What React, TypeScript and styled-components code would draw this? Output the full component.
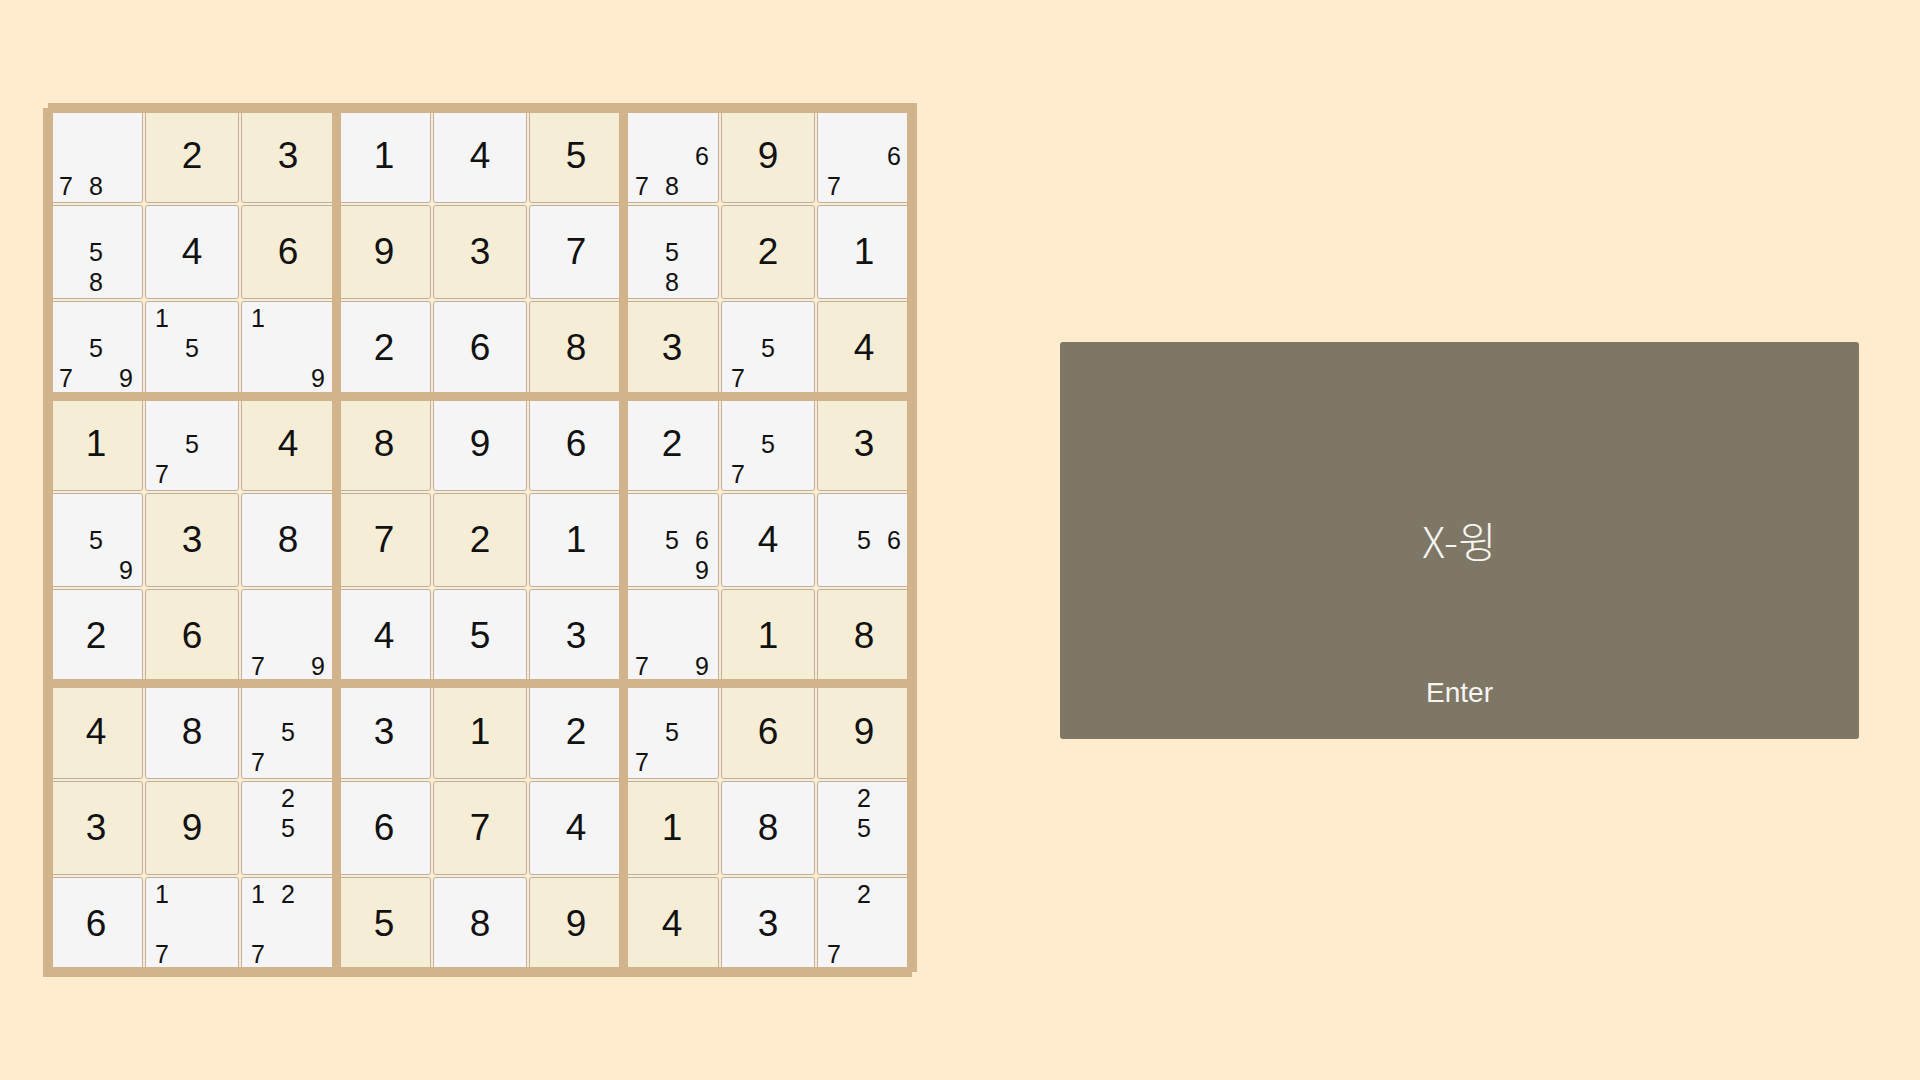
import React from 'react';
import styled, { createGlobalStyle } from 'styled-components';

const GlobalStyle = createGlobalStyle`
  * {
    box-sizing: border-box;
  }
  body {
    margin: 0;
    background: #ffebcd;
    font-family: "Liberation Sans", Arial, sans-serif;
  }
`;

const Page = styled.div`
  width: 100vw;
  height: 100vh;
  display: flex;
  align-items: center;
  padding: 0 61px 0 48px;
  gap: 143px;
`;

const Board = styled.div`
  position: relative;
  width: 869px;
  height: 869px;
  margin-bottom: 5px;
  padding: 6px 6px 1px 1px;
  background: #d2b48c;
  box-shadow: -5px 5px 0 #d2b48c;
`;

const CellGrid = styled.div`
  display: grid;
  grid-template-columns: repeat(9, 94px);
  grid-template-rows: repeat(9, 94px);
  gap: 2px;
  background: #ffebcd;
`;

// thick 3x3 box lines, drawn over the cells
const BoxLines = styled.div`
  position: absolute;
  inset: 10px 10px 5px 5px;
  display: grid;
  grid-template-columns: repeat(3, 1fr);
  grid-template-rows: repeat(3, 1fr);
  gap: 9px;
  pointer-events: none;
`;

const BoxFrame = styled.div`
  box-shadow: 0 0 0 5px #d2b48c;
`;

const Cell = styled.div<{ $given: boolean }>`
  display: flex;
  align-items: center;
  justify-content: center;
  border: 1px solid #b8b0a3;
  border-radius: 3px;
  background: ${({ $given }) => ($given ? '#f6edd7' : '#f5f5f5')};
  color: #111;
  font-size: 37px;
  overflow: hidden;
`;

const Notes = styled.div`
  display: grid;
  grid-template-columns: repeat(3, 30px);
  grid-template-rows: repeat(3, 30px);
  align-items: center;
  justify-items: center;
`;

const Note = styled.span`
  font-size: 25px;
  line-height: 1;
`;

const Panel = styled.div`
  width: 799px;
  height: 397px;
  background: #7f7766;
  border-radius: 3px;
  display: grid;
  grid-template-rows: 1fr auto 1fr;
  justify-items: center;
  color: #f7f5f2;
`;

const Title = styled.div`
  grid-row: 2;
  font-family: "Noto Sans CJK KR", "Liberation Sans", sans-serif;
  font-weight: 300;
  font-size: 42px;
  line-height: 1.2;
`;

const EnterLabel = styled.div`
  grid-row: 3;
  align-self: end;
  margin-bottom: 30px;
  font-size: 28px;
`;

type CellData = { v?: number; given?: boolean; notes?: number[] };

const g = (v: number): CellData => ({ v, given: true });
const s = (v: number): CellData => ({ v, given: false });
const n = (...notes: number[]): CellData => ({ notes });

const rows: CellData[][] = [
  [n(7, 8), g(2), g(3), s(1), s(4), g(5), n(6, 7, 8), g(9), n(6, 7)],
  [n(5, 8), s(4), g(6), g(9), g(3), s(7), n(5, 8), g(2), s(1)],
  [n(5, 7, 9), n(1, 5), n(1, 9), s(2), s(6), g(8), g(3), n(5, 7), g(4)],
  [g(1), n(5, 7), g(4), g(8), s(9), s(6), s(2), n(5, 7), g(3)],
  [n(5, 9), g(3), s(8), g(7), g(2), s(1), n(5, 6, 9), s(4), n(5, 6)],
  [s(2), g(6), n(7, 9), s(4), s(5), s(3), n(7, 9), g(1), g(8)],
  [g(4), s(8), n(5, 7), s(3), g(1), s(2), n(5, 7), g(6), g(9)],
  [g(3), g(9), n(2, 5), s(6), g(7), s(4), g(1), s(8), n(2, 5)],
  [s(6), n(1, 7), n(1, 2, 7), g(5), s(8), g(9), g(4), s(3), n(2, 7)],
];

const digits = [1, 2, 3, 4, 5, 6, 7, 8, 9];

const SudokuCell = ({ data }: { data: CellData }) => (
  <Cell $given={!!data.given}>
    {data.notes ? (
      <Notes>
        {digits.map((d) => (
          <Note key={d}>{data.notes!.includes(d) ? d : ''}</Note>
        ))}
      </Notes>
    ) : (
      data.v
    )}
  </Cell>
);

const App = () => {
  return (
    <>
      <GlobalStyle />
      <Page>
        <Board>
          <CellGrid>
            {rows.map((row, r) => row.map((c, i) => <SudokuCell key={`${r}-${i}`} data={c} />))}
          </CellGrid>
          <BoxLines>
            {digits.map((d) => (
              <BoxFrame key={d} />
            ))}
          </BoxLines>
        </Board>
        <Panel>
          <Title>X-윙</Title>
          <EnterLabel>Enter</EnterLabel>
        </Panel>
      </Page>
    </>
  );
};

export default App;
